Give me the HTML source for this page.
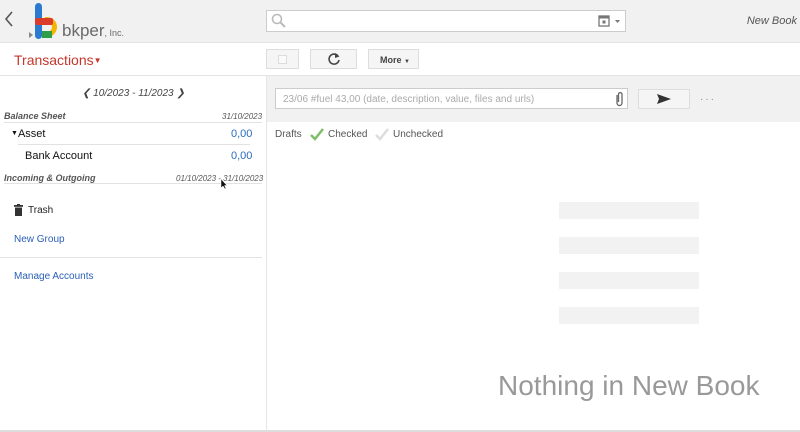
<!DOCTYPE html>
<html><head><meta charset="utf-8"><style>
*{box-sizing:border-box;margin:0;padding:0}
body{width:800px;height:432px;overflow:hidden;background:#fff;font-family:"Liberation Sans",Arial,sans-serif;position:relative;color:#222}
.abs{position:absolute;white-space:nowrap}
</style></head><body>
<div class="abs" style="left:0;top:0;width:800px;height:42px;background:#f1f1f1"></div>
<div class="abs" style="left:0;top:42px;width:800px;height:1px;background:#e4e4e4"></div>
<svg class="abs" style="left:3px;top:10px" width="12" height="18"><path d="M9 2 L3 9 L9 16" stroke="#555" stroke-width="1.6" fill="none"/></svg>
<svg class="abs" style="left:28px;top:2px" width="34" height="38">
<path d="M1 30 L5 33 L1 36Z" fill="#888"/>
<rect x="7" y="1" width="7" height="36" rx="3.5" fill="#2a7bd0"/>
<path d="M17 15 H19 A10 10 0 0 1 19 35 H14 V30 H19 A5 5 0 0 0 19 20 H17Z" fill="#f4b400"/>
<rect x="7" y="16" width="18" height="7" rx="2" fill="#db3b2b"/>
<rect x="14" y="29" width="10" height="7" fill="#2e9e48"/>
</svg>
<div class="abs" style="left:62px;top:21px;font-size:17px;color:#6a6a6a">bkper<span style="font-size:9px">, Inc.</span></div>
<div class="abs" style="left:266px;top:10px;width:360px;height:22px;background:#fff;border:1px solid #ccc"></div>
<svg class="abs" style="left:271px;top:13px" width="16" height="16"><circle cx="6" cy="6" r="4.5" stroke="#bbb" stroke-width="1.6" fill="none"/><path d="M9.5 9.5 L14 14" stroke="#bbb" stroke-width="2"/></svg>
<svg class="abs" style="left:598px;top:14px" width="26" height="14"><rect x="1" y="2" width="10" height="10" fill="none" stroke="#777" stroke-width="1.3"/><rect x="1" y="2" width="10" height="2.5" fill="#777"/><rect x="4.5" y="6.5" width="3" height="3" fill="#777"/><path d="M17 6 L22 6 L19.5 9Z" fill="#777"/></svg>
<div class="abs" style="right:3px;top:15px;font-size:11px;font-style:italic;color:#555">New Book</div>

<div class="abs" style="left:14px;top:52px;font-size:14px;color:#c4372a">Transactions<span style="font-size:8px;vertical-align:2px">▼</span></div>
<div class="abs" style="left:266px;top:49px;width:33px;height:20px;background:#f5f5f5;border:1px solid #ddd"></div>
<div class="abs" style="left:278px;top:55px;width:9px;height:9px;border:1px solid #ddd;background:#fafafa"></div>
<div class="abs" style="left:310px;top:49px;width:47px;height:20px;background:#f5f5f5;border:1px solid #ddd"></div>
<svg class="abs" style="left:327px;top:52px" width="14" height="14"><path d="M11 4 A5 5 0 1 0 12 8" stroke="#444" stroke-width="1.6" fill="none"/><path d="M8 1 L12.5 4.5 L8 6Z" fill="#444"/></svg>
<div class="abs" style="left:368px;top:49px;width:51px;height:20px;background:#f5f5f5;border:1px solid #ddd;font-size:9px;font-weight:bold;color:#444;padding:5px 0 0 11px">More <span style="font-size:6px">▼</span></div>
<div class="abs" style="left:0;top:75px;width:800px;height:1px;background:#e4e4e4"></div>

<div class="abs" style="left:266px;top:76px;width:534px;height:46px;background:#f1f1f1"></div>
<div class="abs" style="left:266px;top:76px;width:1px;height:356px;background:#e6e6e6"></div>
<div class="abs" style="left:275px;top:88px;width:353px;height:21px;background:#fff;border:1px solid #ccc;font-size:10px;color:#aaa;padding:5px 0 0 7px">23/06 #fuel 43,00 (date, description, value, files and urls)</div>
<svg class="abs" style="left:613px;top:90px" width="12" height="18"><path d="M4 5 V13 A2.5 2.5 0 0 0 9 13 V4 A1.8 1.8 0 0 0 5.5 4 V12" stroke="#666" stroke-width="1.3" fill="none"/></svg>
<div class="abs" style="left:638px;top:89px;width:52px;height:20px;background:#f5f5f5;border:1px solid #ddd"></div>
<svg class="abs" style="left:656px;top:93px" width="16" height="12"><path d="M1 1 L15 6 L1 11 L3 6Z" fill="#333"/></svg>
<div class="abs" style="left:700px;top:94px;font-size:10px;color:#888;letter-spacing:2px">···</div>
<div class="abs" style="left:275px;top:129px;font-size:10px;color:#555">Drafts</div>
<svg class="abs" style="left:309px;top:127px" width="16" height="14"><path d="M2 8 L6 12 L14 2" stroke="#7fbf6a" stroke-width="2.5" fill="none"/></svg>
<div class="abs" style="left:328px;top:129px;font-size:10px;color:#555">Checked</div>
<svg class="abs" style="left:374px;top:127px" width="16" height="14"><path d="M2 8 L6 12 L14 2" stroke="#ddd" stroke-width="2.5" fill="none"/></svg>
<div class="abs" style="left:393px;top:129px;font-size:10px;color:#555">Unchecked</div>

<div class="abs" style="left:559px;top:202px;width:140px;height:17px;background:#f2f2f3"></div>
<div class="abs" style="left:559px;top:237px;width:140px;height:17px;background:#f2f2f3"></div>
<div class="abs" style="left:559px;top:272px;width:140px;height:17px;background:#f2f2f3"></div>
<div class="abs" style="left:559px;top:307px;width:140px;height:17px;background:#f2f2f3"></div>
<div class="abs" style="left:498px;top:370px;font-size:28px;color:#999">Nothing in New Book</div>
<div class="abs" style="left:0;top:430px;width:800px;height:2px;background:#ddd"></div>

<div class="abs" style="left:82px;top:88px;font-size:10px;font-style:italic;color:#444">❮ 10/2023 - 11/2023 ❯</div>
<div class="abs" style="left:4px;top:111px;font-size:9px;font-weight:bold;font-style:italic;color:#555">Balance Sheet</div>
<div class="abs" style="left:222px;top:112px;font-size:8px;font-style:italic;color:#555">31/10/2023</div>
<div class="abs" style="left:4px;top:122px;width:258px;height:1px;background:#e2e2e2"></div>
<div class="abs" style="left:11px;top:128px;font-size:11px;color:#111"><span style="font-size:7px;vertical-align:2px">▼</span>Asset</div>
<div class="abs" style="left:231px;top:128px;font-size:11px;color:#2a6cc0">0,00</div>
<div class="abs" style="left:18px;top:144px;width:232px;height:1px;background:#e2e2e2"></div>
<div class="abs" style="left:25px;top:150px;font-size:11px;color:#111">Bank Account</div>
<div class="abs" style="left:231px;top:150px;font-size:11px;color:#2a6cc0">0,00</div>
<div class="abs" style="left:4px;top:173px;font-size:9px;font-weight:bold;font-style:italic;color:#555">Incoming &amp; Outgoing</div>
<div class="abs" style="left:176px;top:174px;font-size:8px;font-style:italic;color:#555">01/10/2023 - 31/10/2023</div>
<div class="abs" style="left:4px;top:183px;width:258px;height:1px;background:#e2e2e2"></div>
<svg class="abs" style="left:14px;top:204px" width="9" height="12"><rect x="0" y="1" width="9" height="1.8" fill="#333"/><rect x="3" y="0" width="3" height="1.5" fill="#333"/><rect x="1" y="3.5" width="7" height="8.5" fill="#333"/></svg>
<div class="abs" style="left:28px;top:205px;font-size:10px;color:#222">Trash</div>
<div class="abs" style="left:14px;top:234px;font-size:10px;color:#2a5fb8">New Group</div>
<div class="abs" style="left:0;top:257px;width:262px;height:1px;background:#e2e2e2"></div>
<div class="abs" style="left:14px;top:271px;font-size:10px;color:#2a5fb8">Manage Accounts</div>
<svg class="abs" style="left:220px;top:178px" width="8" height="12"><path d="M1 1 L1 10 L3 8 L5 11 L6 10.5 L4.5 7.5 L7 7.5Z" fill="#111" stroke="#fff" stroke-width=".5"/></svg>
</body></html>
